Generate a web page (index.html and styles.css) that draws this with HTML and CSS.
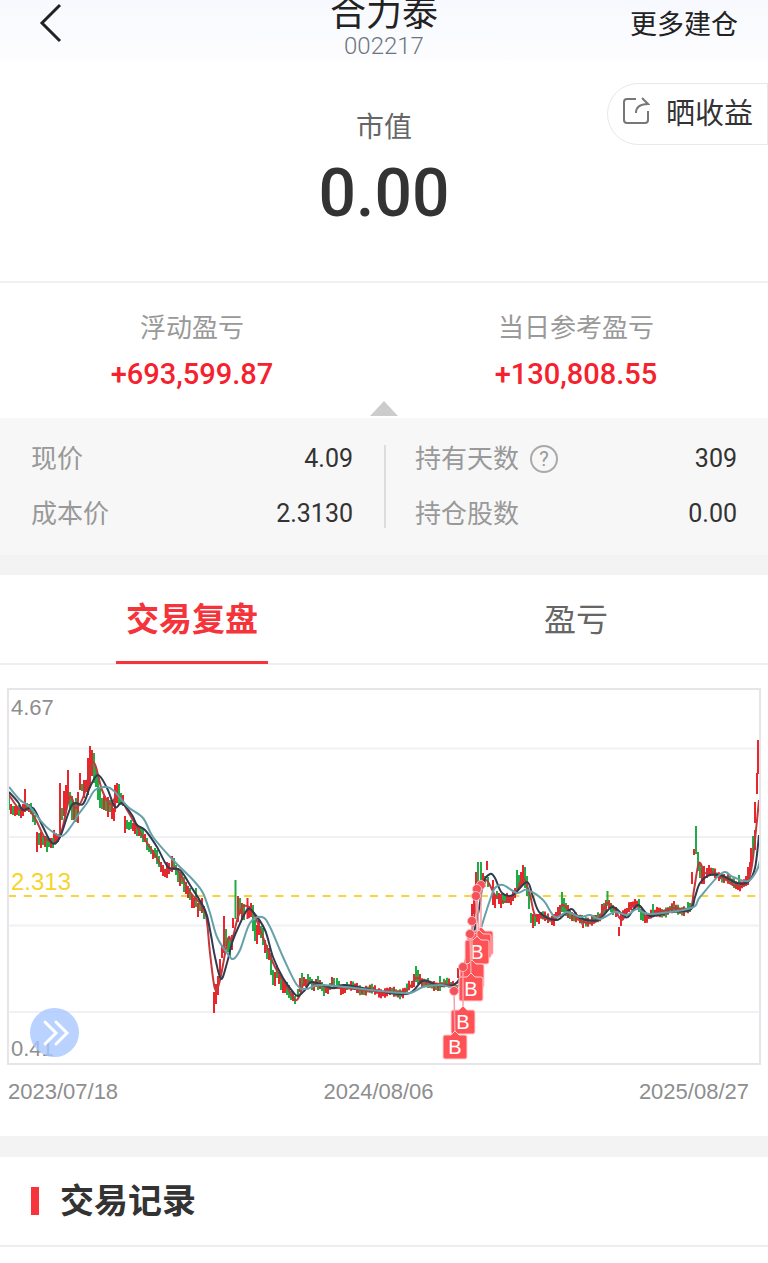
FILE: index.html
```html
<!DOCTYPE html>
<html lang="zh-CN">
<head>
    <meta charset="UTF-8">
    <meta name="viewport" content="width=device-width, initial-scale=1.0">
    <title>合力泰 002217</title>
    <link rel="stylesheet" href="styles.css">
</head>
<body>

    <header class="header">
        <button class="back" type="button" aria-label="返回">
            <svg width="24" height="40" viewBox="0 0 24 40"><path d="M21 2 3 20l18 18" fill="none" stroke="#222" stroke-width="3"/></svg>
        </button>
        <div class="title">
            <h1>合力泰</h1>
            <span class="code">002217</span>
        </div>
        <a class="more" href="#">更多建仓</a>
    </header>

    <section class="market">
        <p class="market-label">市值</p>
        <p class="market-value">0.00</p>
        <button class="share" type="button">
            <svg width="28" height="28" viewBox="0 0 28 28" fill="none" stroke="#777" stroke-width="2">
                <path d="M14 2H5Q2 2 2 5v18q0 3 3 3h18q3 0 3-3v-9"/>
                <path d="M14 16q0-9 12-9l-6-6"/>
            </svg>
            晒收益
        </button>
    </section>

    <section class="profit">
        <div class="profit-item">
            <p class="profit-label">浮动盈亏</p>
            <p class="profit-value">+693,599.87</p>
        </div>
        <div class="profit-item">
            <p class="profit-label">当日参考盈亏</p>
            <p class="profit-value">+130,808.55</p>
        </div>
        <span class="arrow-up"></span>
    </section>

    <section class="details">
        <dl class="detail-col">
            <div class="row"><dt>现价</dt><dd>4.09</dd></div>
            <div class="row"><dt>成本价</dt><dd>2.3130</dd></div>
        </dl>
        <dl class="detail-col">
            <div class="row">
                <dt>持有天数
                    <button class="help" type="button" aria-label="说明">?</button>
                </dt>
                <dd>309</dd>
            </div>
            <div class="row"><dt>持仓股数</dt><dd>0.00</dd></div>
        </dl>
    </section>

    <nav class="tabs">
        <button class="tab active" type="button"><span>交易复盘</span></button>
        <button class="tab" type="button"><span>盈亏</span></button>
    </nav>

    <section class="review">
        <div class="chart">
            <svg class="plot" viewBox="9 690 750 373">
                <path class="grid-line" d="M9 748.5H759M9 837H759M9 925.5H759M9 1012H759"/>
                <path class="cost-line" d="M8 896H759"/>
                <g id="candles"></g>
                <g id="averages"></g>
                <g id="buys"></g>
            </svg>
            <span class="scale scale-max">4.67</span>
            <span class="scale scale-cost">2.313</span>
            <span class="scale scale-min">0.41</span>
            <button class="expand" type="button" aria-label="展开">
                <svg width="49" height="49" viewBox="0 0 49 49"><path d="m15 14 11 11-11 11M26 14l11 11-11 11" fill="none" stroke="#fff" stroke-width="3" stroke-linecap="round"/></svg>
            </button>
        </div>
        <div class="dates">
            <span>2023/07/18</span>
            <span>2024/08/06</span>
            <span>2025/08/27</span>
        </div>
    </section>

    <section class="records">
        <h2>交易记录</h2>
    </section>

    <script src="chart.js"></script>
</body>
</html>
```
FILE: styles.css
```css
* {
    box-sizing: border-box;
}
body {
    margin: 0;
    background-color: #fff;
    color: #333;
    font-family: Roboto, "Noto Sans CJK SC", sans-serif;
    font-size: 26px;
}
h1, h2, p, dl, dd {
    margin: 0;
}
button {
    padding: 0;
    border: 0;
    background: none;
    color: inherit;
    font: inherit;
}
svg {
    display: block;
}

/* Header */
.header {
    display: grid;
    grid-template-columns: 1fr auto 1fr;
    height: 60px;
    padding: 0 30px 0 39px;
    background: linear-gradient(#f7f9fe, #fdfdff);
}
.back {
    justify-self: start;
    align-self: start;
    margin-top: 3px;
}
.title {
    text-align: center;
    margin-right: 9px;
}
.title h1 {
    font-size: 36px;
    font-weight: 400;
    line-height: 28px;
    color: #222;
}
.code {
    display: block;
    font-size: 24px;
    font-weight: 300;
    line-height: 36px;
    color: #6c7580;
}
.more {
    justify-self: end;
    font-size: 27px;
    line-height: 50px;
    color: #222;
    text-decoration: none;
}

/* Market value */
.market {
    position: relative;
    height: 223px;
    padding-top: 48px;
    border-bottom: 2px solid #f0f0f0;
    text-align: center;
}
.market-label {
    font-size: 28px;
    line-height: 40px;
    color: #666;
}
.market-value {
    font-size: 66px;
    font-weight: 500;
    line-height: 92px;
}
.share {
    position: absolute;
    top: 23px;
    right: 0;
    display: flex;
    align-items: center;
    gap: 16px;
    height: 62px;
    padding: 0 14px 6px;
    border: 1px solid #e8e8e8;
    border-radius: 31px 0 0 31px;
    background-color: #fff;
    font-size: 29px;
}

/* Profit */
.profit {
    position: relative;
    display: grid;
    grid-template-columns: 1fr 1fr;
    height: 135px;
    padding-top: 25px;
    text-align: center;
}
.profit-label {
    line-height: 40px;
    color: #999;
}
.profit-value {
    font-size: 29px;
    font-weight: 500;
    line-height: 52px;
    color: #f5222d;
}
.arrow-up {
    position: absolute;
    bottom: 2px;
    left: 50%;
    margin-left: -14px;
    border: 14px solid transparent;
    border-top: 0;
    border-bottom: 15px solid #ccc;
}

/* Details */
.details {
    display: grid;
    grid-template-columns: 1fr 1fr;
    padding: 27px 0;
    border-bottom: 20px solid #f3f3f3;
    background-color: #f7f7f7;
}
.detail-col {
    display: grid;
    gap: 27px;
    padding: 0 31px;
}
.detail-col + .detail-col {
    border-left: 2px solid #ddd;
    padding-left: 29px;
}
.row {
    display: flex;
    justify-content: space-between;
    line-height: 28px;
}
.row dt {
    display: flex;
    align-items: center;
    gap: 11px;
    color: #999;
}
.row dd {
    font-size: 25px;
}
.help {
    width: 28px;
    height: 28px;
    border: 2px solid #aaa;
    border-radius: 50%;
    font-size: 20px;
    line-height: 24px;
    color: #999;
}

/* Tabs */
.tabs {
    display: grid;
    grid-template-columns: 1fr 1fr;
    height: 90px;
    border-bottom: 2px solid #eee;
}
.tab {
    display: flex;
    flex-direction: column;
    align-items: center;
    font-size: 32px;
    line-height: 90px;
    color: #666;
}
.tab.active {
    font-size: 33px;
    font-weight: 700;
    color: #f5333b;
}
.tab.active span {
    padding: 0 10px;
    height: 89px;
    border-bottom: 3px solid #f5333b;
}

/* Chart */
.review {
    padding: 23px 7px 29px;
    border-bottom: 21px solid #f3f3f3;
    font-family: "Liberation Sans", Arial, sans-serif;
    font-size: 22px;
    color: #8e8e8e;
}
.chart {
    position: relative;
    border: 2px solid #e6e6ea;
}
.plot {
    width: 100%;
    height: auto;
}
.grid-line {
    stroke: #f0f1f5;
    stroke-width: 2;
}
.cost-line {
    stroke: #f7d43c;
    stroke-width: 2;
    stroke-dasharray: 8 7.73;
}
.up, .down, .average {
    fill: none;
    stroke-width: 2;
}
.up {
    stroke: #ea262d;
}
.down {
    stroke: #1fac46;
}
.fast {
    stroke: #c2383b;
}
.mid {
    stroke: #2f3b4f;
}
.slow {
    stroke: #66a0a8;
}
.buy-box {
    fill: #ff5257;
    stroke: #ffd0d2;
    stroke-width: 1;
}
.buy-dot {
    fill: #f5515a;
    stroke: #ffb9bd;
}
.buy-stem {
    fill: none;
    stroke: #f7a0a5;
    stroke-width: 1.5;
}
.buy-text {
    fill: #fff;
    font-size: 20px;
    text-anchor: middle;
}
.scale {
    position: absolute;
    left: 2px;
    line-height: 26px;
}
.scale-max {
    top: 5px;
}
.scale-cost {
    top: 48%;
    font-size: 24px;
    color: #f7d428;
}
.scale-min {
    bottom: 1px;
}
.expand {
    position: absolute;
    bottom: 6px;
    left: 21px;
    width: 49px;
    height: 49px;
    border-radius: 50%;
    background-color: rgba(168, 199, 255, 0.8);
}
.dates {
    display: flex;
    justify-content: space-between;
    padding: 12px 12px 0 1px;
    line-height: 30px;
}

/* Records */
.records {
    padding: 30px 31px;
    border-bottom: 2px solid #eee;
}
.records h2 {
    display: flex;
    align-items: center;
    gap: 21px;
    font-size: 34px;
    line-height: 28px;
}
.records h2::before {
    content: "";
    width: 8px;
    height: 28px;
    background-color: #f9333a;
}
```
FILE: chart.js
```javascript
// x, high, low, direction (r = up, g = down)
const candles = `9 792 810 g,11 804 814 r,13 806 815 g,15 806 816 r,17 807 815 r,19 805 816 g,21 808 818 r,23 804 816 r,25 789 812 r,27 803 811 g,29 804 812 r,31 803 814 g,33 811 822 g,35 815 825 g,37 832 852 r,39 833 845 g,41 832 848 r,43 836 845 g,45 836 847 r,47 836 852 g,49 838 847 g,51 838 848 r,53 838 848 g,54 830 844 r,56 833 842 r,58 834 842 r,60 783 838 r,62 808 820 g,64 791 816 r,66 785 811 r,68 770 804 r,70 792 810 g,72 796 820 g,74 803 820 r,76 798 822 g,78 792 823 r,80 773 790 r,82 784 791 g,84 780 798 r,86 780 792 r,88 758 795 r,90 746 788 r,92 750 776 r,94 753 783 g,96 767 787 g,98 776 800 g,100 788 808 g,102 798 809 g,104 796 810 r,106 798 811 g,108 797 817 r,110 800 812 g,112 803 819 r,114 808 821 r,115 785 812 r,117 783 803 r,119 784 805 g,121 793 805 g,123 795 806 r,125 816 833 r,127 820 829 g,129 822 830 g,131 820 829 g,133 823 831 r,135 822 834 r,137 824 836 g,139 826 836 r,141 828 838 g,143 828 842 g,145 834 842 r,147 838 850 g,149 844 852 g,151 846 854 g,153 850 859 r,155 848 858 g,157 850 864 g,159 856 867 g,161 862 872 r,163 865 876 r,165 869 877 r,167 862 878 r,169 863 874 r,172 856 872 r,174 858 870 g,176 865 875 g,178 868 882 g,180 872 886 r,182 872 884 g,184 877 892 g,186 882 894 r,188 886 898 r,190 888 900 g,192 894 908 r,194 898 908 r,196 888 907 g,198 903 917 r,200 900 911 g,202 898 913 r,204 906 919 g,214 992 1013 r,216 984 1004 r,218 976 995 r,220 959 978 r,222 945 958 r,224 916 953 r,226 929 946 g,228 938 952 g,230 938 957 g,232 935 950 r,233 918 928 r,235.5 880 919 g,238 896 922 r,240 898 914 g,242 903 920 r,244 904 920 g,247.5 898 919 r,249 906 918 r,251 903 917 r,253 905 931 g,255 920 941 g,257 925 944 r,259 920 935 r,261 926 938 g,263 928 945 g,265 940 953 r,267 945 959 g,269 948 960 r,271 953 975 g,273 970 985 g,275 972 986 r,277 965 978 g,279 973 984 r,281 975 990 g,283 980 993 r,285 984 993 r,287 982 995 g,289 985 998 g,291 991 1000 g,293 992 1001 r,295 996 1004 g,298 989 997 g,300 978 992 r,302 973 988 g,304 977 986 r,306 979 987 r,308 974 986 g,310 977 984 g,312 979 990 g,314 982 991 r,316 979 987 r,318 976 990 g,320 980 989 r,322 982 991 g,324 985 996 g,326 986 993 r,328 985 994 r,330 983 990 g,332 977 986 r,334 978 987 g,337 978 988 g,339 981 988 g,341 985 995 r,343 985 994 r,345 984 993 r,347 982 990 g,416 966 982 g,418 970 984 g,420 974 984 r,414 974 987 r,412 981 988 r,440 976 989 g,458 968 978 r,472 904 918 r,474 890 914 r,476 872 892 r,478 862 885 g,481 862 886 g,483 873 887 r,485 876 887 g,487 861 870 r,488 877 887 g,493 880 905 r,495 895 908 r,497 891 899 g,499 893 904 r,501 894 908 r,503 893 904 g,505 895 902 g,507 893 903 r,509 896 903 r,511 895 905 r,513 890 901 r,515 888 898 r,517 870 894 g,519 875 888 g,521 872 887 r,523 865 885 r,525 867 888 g,527 876 896 g,529 890 909 g,531 913 923 g,533 914 928 r,535 915 926 g,537 914 922 r,539 914 924 r,554 914 926 r,556 912 921 r,558 907 917 r,560 905 917 r,562 892 912 g,564 898 912 g,566 903 916 g,568 905 918 r,570 910 919 g,572 912 921 r,583 918 928 r,602 904 917 r,604 903 914 g,606 900 913 r,607.5 891 906 g,609 900 908 r,611 903 912 g,613 905 915 g,616 907 917 r,619 927 936 r,621 914 926 r,639 899 912 g,641 909 920 g,643 911 921 g,653 904 916 g,674 901 911 r,688 902 911 g,692 872 884 r,694 849 855 r,696 826 854 g,698 852 871 g,700 864 878 g,702 868 884 r,704 866 884 r,707 868 878 r,709 865 876 r,739 875 885 g,748 867 885 r,750 862 876 r,751 848 870 r,753 836 857 g,755 830 850 r,755 802 823 r,757 773 794 r,758 740 774 r`
    .split(',').map(c => c.split(' '));

// Quiet stretches: middle of the price band at each x
const bands = [
    [[349, 987], [360, 989], [375, 991], [390, 993], [403, 992], [411, 986]],
    [[422, 982], [430, 986], [445, 984], [458, 986]],
    [[541, 917], [548, 917], [553, 919]],
    [[574, 917], [580, 921], [592, 920], [601, 919]],
    [[623, 914], [629, 906], [638, 906]],
    [[645, 917], [660, 912], [672, 910], [691, 909]],
    [[711, 873], [720, 875], [730, 882], [738, 885], [747, 882]]
];

const averages = {
    fast: [[9, 795], [20, 810], [27, 808], [36, 820], [45, 838], [56, 842], [62, 830], [70, 797], [76, 808], [84, 795], [93, 762], [102, 790], [110, 804], [118, 795], [126, 808], [140, 832], [155, 855], [166, 872], [176, 868], [190, 892], [203, 907], [207, 922], [210, 953], [215, 989], [220, 980], [228, 939], [232, 940], [238, 917], [244, 906], [253, 912], [266, 945], [275, 967], [287, 987], [295, 1000], [300, 995], [305, 982], [318, 984], [330, 988], [345, 988], [375, 991], [405, 991], [416, 978], [425, 982], [455, 984], [463, 970], [472, 930], [478, 895], [486, 880], [495, 895], [505, 902], [515, 895], [523, 878], [530, 895], [535, 915], [545, 918], [555, 920], [562, 905], [570, 912], [583, 922], [597, 921], [607, 903], [615, 910], [622, 920], [630, 907], [640, 906], [647, 918], [660, 912], [675, 908], [690, 909], [694, 890], [699, 863], [705, 873], [712, 872], [725, 879], [735, 886], [747, 883], [752, 865], [756, 830], [759, 800]],
    mid: [[9, 792], [18, 802], [23, 810], [33, 808], [42, 825], [52, 843], [60, 837], [72, 805], [83, 804], [90, 787], [98, 775], [107, 788], [115, 807], [122, 803], [132, 815], [137, 825], [145, 830], [157, 847], [168, 867], [180, 870], [190, 885], [205, 910], [210, 930], [215, 957], [221, 979], [227, 963], [232, 943], [238, 928], [247, 910], [253, 912], [265, 930], [273, 957], [283, 978], [293, 992], [298, 996], [305, 990], [312, 982], [333, 988], [345, 985], [390, 993], [410, 993], [422, 981], [430, 982], [437, 985], [455, 984], [465, 965], [475, 928], [480, 903], [483, 883], [490, 874], [495, 878], [502, 893], [513, 895], [527, 882], [533, 897], [540, 913], [557, 920], [571, 909], [580, 918], [598, 920], [612, 907], [623, 915], [628, 917], [638, 905], [650, 916], [670, 912], [690, 910], [695, 897], [700, 883], [710, 875], [723, 876], [737, 883], [748, 882], [755, 868], [759, 835]],
    slow: [[9, 787], [20, 800], [30, 807], [40, 820], [50, 830], [62, 836], [72, 825], [78, 815], [87, 803], [95, 790], [107, 787], [115, 792], [128, 807], [143, 818], [153, 837], [173, 860], [193, 880], [203, 893], [210, 913], [217, 937], [227, 953], [233, 959], [240, 950], [250, 923], [262, 917], [270, 927], [283, 957], [297, 985], [307, 989], [323, 985], [390, 992], [410, 993], [423, 987], [440, 985], [458, 986], [470, 965], [482, 925], [490, 900], [495, 888], [503, 885], [517, 893], [527, 890], [543, 900], [555, 917], [567, 912], [580, 917], [590, 915], [600, 919], [615, 912], [627, 915], [637, 909], [650, 914], [691, 908], [700, 897], [722, 873], [733, 877], [748, 881], [757, 870], [760, 860]]
};

// Trade point and its label: dot x, dot y, label x, label y, text
const buys = [
    [481, 885, 481, 943, ''],
    [477, 889, 479, 946, ''],
    [476, 896, 477, 952, 'B'],
    [472, 921, 472, 976, ''],
    [470, 934, 471, 989, 'B'],
    [463, 967, 463, 1022, 'B'],
    [454, 991, 455, 1047, 'B']
];

function fillBand(points) {
    for (let i = 0; i < points.length - 1; i++) {
        const [x1, y1] = points[i];
        const [x2, y2] = points[i + 1];
        for (let x = x1; x < x2; x += 2) {
            const wave = Math.sin(x * 12.9) * 2;
            const half = 2 + Math.abs(Math.sin(x * 7.3)) * 3;
            const mid = y1 + (y2 - y1) * (x - x1) / (x2 - x1) + wave;
            candles.push([x, mid - half, mid + half, Math.sin(x * 4.7) > 0.3 ? 'g' : 'r']);
        }
    }
}

function candlePath(direction) {
    return candles.filter(c => c[3] === direction)
        .map(c => `M${c[0]} ${c[1]}V${c[2]}`).join('');
}

function curve(points) {
    let d = `M${points[0]}`;
    for (let i = 0; i < points.length - 1; i++) {
        const before = points[i - 1] || points[i];
        const a = points[i];
        const b = points[i + 1];
        const after = points[i + 2] || b;
        d += `C${a[0] + (b[0] - before[0]) / 6} ${a[1] + (b[1] - before[1]) / 6} `
            + `${b[0] - (after[0] - a[0]) / 6} ${b[1] - (after[1] - a[1]) / 6} ${b}`;
    }
    return d;
}

bands.forEach(fillBand);

document.getElementById('candles').innerHTML =
    `<path class="up" d="${candlePath('r')}"/><path class="down" d="${candlePath('g')}"/>`;

document.getElementById('averages').innerHTML = Object.keys(averages)
    .map(name => `<path class="average ${name}" d="${curve(averages[name])}"/>`).join('');

document.getElementById('buys').innerHTML = buys.map(([x, y, bx, by, text]) => `
    <path class="buy-stem" d="M${x} ${y}L${bx} ${by - 12}"/>
    <path class="buy-box" d="M${bx - 10} ${by - 12}h6l4-4 4 4h6q2 0 2 2v20q0 2-2 2h-20q-2 0-2-2v-20q0-2 2-2z"/>
    ${text && `<text class="buy-text" x="${bx}" y="${by + 7}">${text}</text>`}`).join('')
    + buys.map(([x, y]) => `<circle class="buy-dot" cx="${x}" cy="${y}" r="4.5"/>`).join('');
```
